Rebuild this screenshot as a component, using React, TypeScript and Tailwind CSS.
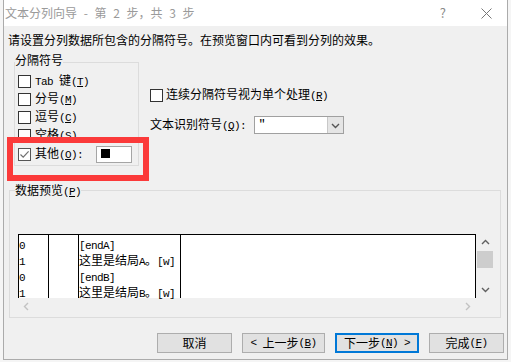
import React from 'react';

// latin runs in the dialog use a narrow mono face, like the bitmap font in the shot
const M: React.FC<{ children: React.ReactNode; u?: boolean }> = ({ children, u }) => (
  <span className={`font-['Liberation_Mono',monospace] text-[11px] tracking-[-0.6px] ${u ? 'underline underline-offset-1' : ''}`}>
    {children}
  </span>
);

const Check: React.FC<{ checked?: boolean }> = ({ checked }) => (
  <span
    className={`w-[13px] h-[13px] shrink-0 bg-white border flex items-center justify-center ${
      checked ? 'border-[#555555]' : 'border-[#333333]'
    }`}
  >
    {checked && (
      <svg width="11" height="11" viewBox="0 0 11 11">
        <path d="M1.5 5.5 L4.2 8.2 L9.6 2.4" stroke="#707070" strokeWidth="1.2" fill="none" />
      </svg>
    )}
  </span>
);

const Option: React.FC<{ children: React.ReactNode; checked?: boolean }> = ({ children, checked }) => (
  <div className="h-[18px] flex items-center">
    <Check checked={checked} />
    <span className="ml-[4px] leading-[16px] whitespace-nowrap">{children}</span>
  </div>
);

const Chevron: React.FC<{ dir: 'up' | 'down' | 'left' | 'right'; color?: string }> = ({ dir, color = '#606060' }) => {
  const d = {
    up: 'M1 6 L4.5 2.5 L8 6',
    down: 'M1 3 L4.5 6.5 L8 3',
    left: 'M6 1 L2.5 4.5 L6 8',
    right: 'M3 1 L6.5 4.5 L3 8',
  }[dir];
  return (
    <svg width="9" height="9" viewBox="0 0 9 9">
      <path d={d} stroke={color} strokeWidth="1.4" fill="none" />
    </svg>
  );
};

const rows = [
  { a: '0', c: <M>[endA]</M> },
  { a: '1', c: <>这里是结局<M>A</M>。<M>[w]</M></> },
  { a: '0', c: <M>[endB]</M> },
  { a: '1', c: <>这里是结局<M>B</M>。<M>[w]</M></> },
];

export default function App() {
  return (
    <div className="w-[511px] h-[362px] overflow-hidden relative bg-[#f5f5f5] text-[12px] text-black font-['Noto_Sans_CJK_SC',sans-serif]">
      <div className="ml-[3px] w-[505px] h-[360px] border-x border-b border-[#ababab] bg-[#f0f0f0] flex flex-col">
        {/* title bar */}
        <div className="h-[26px] shrink-0 bg-white flex items-center pl-[1px] pr-[15px]">
          <span className="text-[#9a9a9a] leading-[16px] [word-spacing:4px]">文本分列向导 - 第 2 步，共 3 步</span>
          <span className="ml-auto text-[#8a8a8a] text-[13px] leading-[16px]">?</span>
          <svg className="ml-[35px]" width="11" height="11" viewBox="0 0 11 11">
            <path d="M0.5 0.5 L10.5 10.5 M10.5 0.5 L0.5 10.5" stroke="#777777" strokeWidth="1" />
          </svg>
        </div>

        <div className="mt-[6px] ml-[4px] h-[16px] leading-[16px] whitespace-nowrap">
          请设置分列数据所包含的分隔符号。在预览窗口内可看到分列的效果。
        </div>

        <div className="flex items-start mt-[4px]">
          <fieldset className="ml-[10px] w-[125px] border border-[#dcdcdc]">
            <legend className="h-[20px] leading-[16px] pb-[4px]">分隔符号</legend>
            <div className="pl-[3px] pb-[1px] flex flex-col">
              <Option>
                <M>Tab </M>键<M>(</M><M u>T</M><M>)</M>
              </Option>
              <Option>
                分号<M>(</M><M u>M</M><M>)</M>
              </Option>
              <Option>
                逗号<M>(</M><M u>C</M><M>)</M>
              </Option>
              <Option>
                空格<M>(</M><M u>S</M><M>)</M>
              </Option>
              <div className="h-[20px] flex items-center">
                <Check checked />
                <span className="ml-[4px] w-[61px] leading-[16px] whitespace-nowrap">
                  其他<M>(</M><M u>O</M><M>):</M>
                </span>
                <div className="w-[36px] h-[17px] bg-white border border-[#a5a5a5] pl-[4px] pt-[2px]">
                  <div className="w-[9px] h-[9px] bg-black" />
                </div>
              </div>
            </div>
          </fieldset>

          <div className="ml-[10px] flex flex-col">
            <div className="mt-[34px] h-[18px] pl-[1px] flex items-center">
              <Check />
              <span className="ml-[3px] leading-[16px] whitespace-nowrap">
                连续分隔符号视为单个处理<M>(</M><M u>R</M><M>)</M>
              </span>
            </div>
            <div className="mt-[12px] h-[18px] flex items-center">
              <span className="pl-[1px] w-[105px] leading-[16px] whitespace-nowrap">
                文本识别符号<M>(</M><M u>Q</M><M>):</M>
              </span>
              <div className="w-[90px] h-[18px] border border-[#a0a0a0] bg-white flex">
                <span className="pl-[4px] leading-[14px] text-[13px]">"</span>
                <div className="ml-auto w-[16px] h-full bg-[#e5e5e5] border-l border-[#c8c8c8] flex items-center justify-center">
                  <Chevron dir="down" color="#555555" />
                </div>
              </div>
            </div>
          </div>
        </div>

        {/* preview */}
        <fieldset className="mt-[16px] ml-[5px] w-[492px] border border-[#dcdcdc]">
          <legend className="ml-[5px] h-[16px] leading-[16px]">
            数据预览<M>(</M><M u>P</M><M>)</M>
          </legend>
          <div className="pl-[8px] pt-[36px] pb-[3px]">
            <div className="flex">
              <div className="w-[458px] h-[64px] border-t border-x border-black bg-white flex">
                <div className="w-[30px] border-r border-black pt-[1px]">
                  {rows.map((r, i) => (
                    <div key={i} className="h-[16px] leading-[16px]">
                      <M>{r.a}</M>
                    </div>
                  ))}
                </div>
                <div className="w-[30px] border-r border-black" />
                <div className="w-[102px] border-r border-black pt-[1px]">
                  {rows.map((r, i) => (
                    <div key={i} className="h-[16px] leading-[16px] whitespace-nowrap">
                      {r.c}
                    </div>
                  ))}
                </div>
                <div className="flex-1" />
              </div>
              <div className="w-[18px] h-[64px] flex flex-col items-center">
                <div className="h-[17px] flex items-center justify-center">
                  <Chevron dir="up" />
                </div>
                <div className="w-[16px] h-[17px] bg-[#cdcdcd]" />
                <div className="mt-auto h-[17px] flex items-center justify-center">
                  <Chevron dir="down" />
                </div>
              </div>
            </div>
            <div className="w-[458px] h-[16px] flex items-center justify-between px-[4px]">
              <Chevron dir="left" color="#c2c2c2" />
              <Chevron dir="right" color="#c2c2c2" />
            </div>
          </div>
        </fieldset>

        {/* buttons */}
        <div className="mt-[15px] ml-[153px] flex gap-[10px] leading-[16px]">
          <button className="w-[75px] h-[20px] border border-[#adadad] bg-[#e1e1e1] flex items-center justify-center">
            取消
          </button>
          <button className="w-[83px] h-[20px] border border-[#adadad] bg-[#e1e1e1] flex items-center justify-center whitespace-nowrap">
            <M>&lt;{'\u00a0'}</M>上一步<M>(</M><M u>B</M><M>)</M>
          </button>
          <button className="w-[84px] h-[20px] border-2 border-[#0078d7] bg-[#e1e1e1] flex items-center justify-center whitespace-nowrap">
            下一步<M>(</M><M u>N</M><M>){'\u00a0'}&gt;</M>
          </button>
          <button className="w-[75px] h-[20px] border border-[#adadad] bg-[#e1e1e1] flex items-center justify-center whitespace-nowrap">
            完成<M>(</M><M u>F</M><M>)</M>
          </button>
        </div>
      </div>

      {/* red annotation frame drawn over the dialog */}
      <div className="absolute left-[7px] top-[137px] w-[142px] h-[44px] border-[6px] border-[#fb3a3a]" />
    </div>
  );
}
